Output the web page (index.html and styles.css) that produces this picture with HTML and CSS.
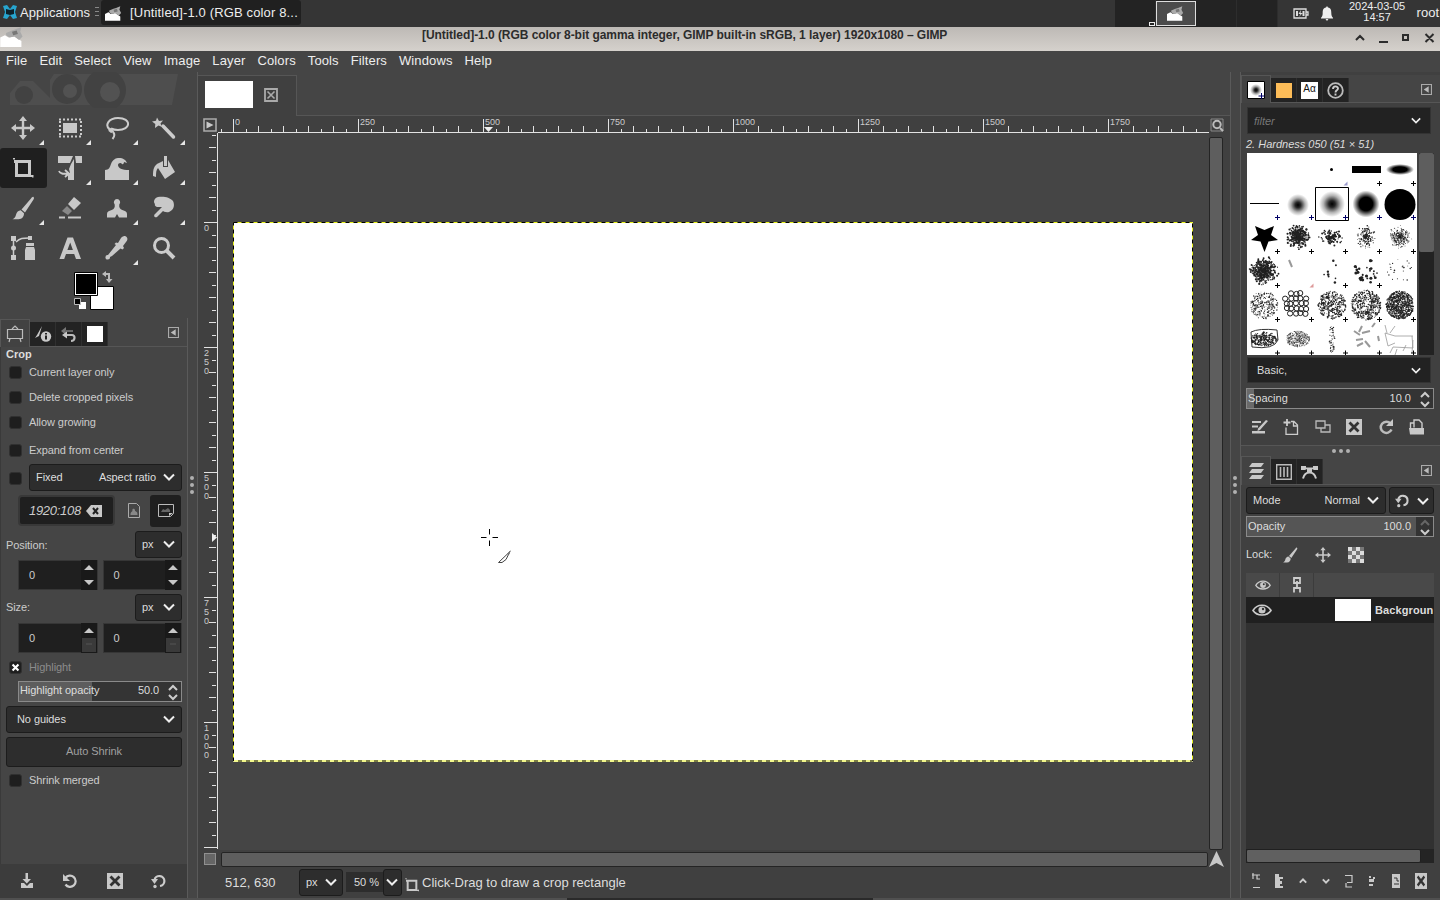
FILE: index.html
```html
<!DOCTYPE html>
<html lang="en">
<head>
  <meta charset="UTF-8">
  <title>[Untitled]-1.0 – GIMP</title>
  <link rel="stylesheet" href="styles.css">
</head>
<body>
  <svg class="defs" width="0" height="0">
    <defs>
      <symbol id="chev" viewBox="0 0 12 8"><path d="M1 1.5l5 5 5-5" fill="none" stroke="#eee" stroke-width="2"/></symbol>
      <symbol id="corner" viewBox="0 0 5 5"><path d="M5 0v5H0z" fill="#e6e6e6"/></symbol>
      <symbol id="dockmenu" viewBox="0 0 10 10"><path d="M.5.5h9v9h-9z" fill="none" stroke="#aaa"/><path d="M7 2v6L2.500 5z" fill="#bbb"/></symbol>
      <symbol id="move" viewBox="0 0 24 24"><path d="M12 0l4 5h-2.800v5.800H19V8l5 4-5 4v-2.800h-5.800V19H16l-4 5-4-5h2.800v-5.800H5V16l-5-4 5-4v2.800h5.800V5H8z"/></symbol>
      <symbol id="crop" viewBox="0 0 24 24"><path d="M3 4h17v15h2v2H4V7H3zM7 7v11h10V7z" fill-rule="evenodd"/><path d="M2 2h2v1.500H2zM21 19h1.500v2.500H21z"/></symbol>
      <symbol id="brush" viewBox="0 0 24 24"><path d="M22.500 1c1 .8.3 2-.3 3L14 16.500l-3.500-3L20 2.500c.8-.9 1.700-2 2.500-1.500zM9.700 14.300l3.300 3c.2 3-2 6-5.500 6H1.500c2-.8 3-2.300 3.500-4.500.6-2.600 2.400-4.300 4.700-4.500z"/></symbol>
      <symbol id="reset" viewBox="0 0 16 16"><path d="M3.500 5a5.600 5.600 0 1 1 0 6.500" fill="none" stroke="#ccc" stroke-width="2.200"/><path d="M1 1v7h7z"/></symbol>
      <symbol id="reset2" viewBox="0 0 16 16"><path d="M3.500 7a5 5 0 1 1 5.500 6" fill="none" stroke="#ccc" stroke-width="2.200"/><path d="M0 6h7l-3.500 5z"/><circle cx="4" cy="13.500" r="1.700"/></symbol>
      <symbol id="del" viewBox="0 0 16 16"><path d="M0 0h16v16H0z"/><path d="M3.500 3.500l9 9m0-9l-9 9" stroke="#333" stroke-width="2.800"/></symbol>
      <symbol id="eye" viewBox="0 0 20 12"><path d="M1 6.500C5-.5 15-.5 19 6.500 15 12.500 5 12.500 1 6.500z" fill="none" stroke="#ccc" stroke-width="1.600"/><circle cx="10" cy="6" r="3.600"/><circle cx="11" cy="5" r="1.200" fill="#333"/></symbol>
      <symbol id="wilber" viewBox="0 0 20 17"><path d="M0 9l4-2 3 2 5-1 6 4v5H0z" fill="#fff"/><path d="M5 5l5-2 3-1 5-2-1 4 2 4-3 3-4-3-4 1-3-2z" fill="#aaa"/><path d="M10 4l4-1 1 3-4 1z" fill="#777"/></symbol>
      <pattern id="hticks" width="25" height="14" patternUnits="userSpaceOnUse" x="15"><path d="M.5 14V8M13.500 14v-3" stroke="#e2e2e2"/></pattern>
      <pattern id="vticks" width="14" height="25" patternUnits="userSpaceOnUse" y="14"><path d="M14 .5H7M14 13.500h-4" stroke="#e2e2e2"/></pattern>
    </defs>
  </svg>

  <!-- desktop panel -->
  <header class="panel">
    <svg class="xfce" viewBox="0 0 16 16"><path d="M1 2l4-1 3 4 3-4 4 1-2 6 2 6-4 1-3-4-3 4-4-1 2-6z" fill="#27a5cf"/><path d="M4 5l4 1 4-1v5l-4 1-4-1z" fill="#0c222c"/></svg>
    <span>Applications</span>
    <svg class="grip" viewBox="0 0 4 10"><path d="M0 .5h4M0 4.500h4M0 8.500h4" stroke="#888"/></svg>
    <div class="task"><svg><use href="#wilber"/></svg><span>[Untitled]-1.0 (RGB color 8...</span></div>
    <div class="pager">
      <div class="desk"><i></i></div>
      <div class="desk-on"><svg><use href="#wilber"/></svg></div>
      <div class="desk"></div>
      <div class="desk"></div>
    </div>
    <svg class="battery" viewBox="0 0 16 11"><path d="M1 1h12v9H1zM13.500 4H15v3h-1.500" fill="none" stroke="#ddd" stroke-width="1.300"/><path d="M3 3h2v5H3zM9.500 3h2v5h-2zM8 2L5.500 6h2L6 9l3.500-4h-2z" fill="#ddd"/></svg>
    <svg class="bell" viewBox="0 0 12 15"><path d="M6 0l1 1.500C10 2 10.300 4.500 10.300 7c0 3 .7 3.500 1.700 4.700v.8H0v-.8C1 10.500 1.700 10 1.700 7c0-2.500.3-5 3.300-5.500zM4.500 13h3L6 15z" fill="#eee"/></svg>
    <div class="clock">2024-03-05<br>14:57</div>
    <span class="user">root</span>
  </header>

  <div class="titlebar">
    <svg class="appicon"><use href="#wilber"/></svg>
    <span class="title">[Untitled]-1.0 (RGB color 8-bit gamma integer, GIMP built-in sRGB, 1 layer) 1920x1080 – GIMP</span>
    <svg class="winbtns" viewBox="0 0 80 12" fill="none" stroke="#2c2c2c" stroke-width="2"><path d="M1 8l4-4 4 4M24 10h9M48 3h5v5h-5zM70.500 2l8 8m0-8l-8 8"/></svg>
  </div>

  <nav class="menubar">
    <span>File</span><span>Edit</span><span>Select</span><span>View</span><span>Image</span><span>Layer</span><span>Colors</span><span>Tools</span><span>Filters</span><span>Windows</span><span>Help</span>
  </nav>

  <main class="main">
    <aside class="left">
      <svg class="wilber-strip" viewBox="0 0 180 36"><path d="M10 33V21L20 9h13l17 17V8l4-6h124l-6 31z" fill="#4e4e4e"/><circle cx="24" cy="23" r="9" fill="#424242"/><circle cx="67" cy="17" r="15" fill="#424242"/><circle cx="70" cy="19" r="7" fill="#525252"/><circle cx="105" cy="18" r="21" fill="#424242"/><circle cx="110" cy="20" r="10" fill="#525252"/></svg>
      <div class="tools">
        <div class="tool"><svg><use href="#move"/></svg><svg class="more"><use href="#corner"/></svg></div>
        <div class="tool"><svg viewBox="0 0 24 24"><path d="M5 7h14v10H5z"/><path d="M1 3.500h23M1 20.500h23M2 5v15M23 5v15" fill="none" stroke="#ccc" stroke-width="2" stroke-dasharray="2 2"/></svg><svg class="more"><use href="#corner"/></svg></div>
        <div class="tool"><svg viewBox="0 0 24 24" ><path d="M5 14C-1 9 4 2 13 2c14 0 13 12 0 12-3 0-5-.5-7-1.500" fill="none" stroke="#ccc" stroke-width="2"/><path d="M4 11.500l4 1.500 1 3-3 1-2.500-2z"/><path d="M8 16c2 2 2 4-.5 7" fill="none" stroke="#ccc" stroke-width="2"/></svg><svg class="more"><use href="#corner"/></svg></div>
        <div class="tool"><svg viewBox="0 0 24 24"><path d="M5 1.500l2 3.500 4-.5-2.500 3L10 11 6.500 9.500 3 12l.3-4L0 5.500l4-.7z"/><path d="M11 10l10.500 11" stroke="#ccc" stroke-width="3.500" stroke-linecap="round"/></svg><svg class="more"><use href="#corner"/></svg></div>
        <div class="tool on"><svg><use href="#crop"/></svg></div>
        <div class="tool"><svg viewBox="0 0 24 24"><path d="M0 0h15l-3 7H0zM17 0h7v7h-6zM16 3v21h-6v-5l2-2-1-4 2-5z"/><path d="M1 15c1 3 4 3 9 2.500m-3-3.500l4 3.500L7 21" fill="none" stroke="#ccc" stroke-width="1.800"/></svg><svg class="more"><use href="#corner"/></svg></div>
        <div class="tool"><svg viewBox="0 0 24 24"><path d="M0 24V14c4 0 5-3 6-6 2-5 5-6 8-6 4 0 7 2 8 5l-3-1c0 1.500-1 3-2 2-1-2-4-1-4 1 0 3 4 5 11 5v10z"/></svg><svg class="more"><use href="#corner"/></svg></div>
        <div class="tool"><svg viewBox="0 0 24 24"><path d="M7 7l4-2v6h5V4l7 12-10 7-7-11c-2 2-2 5-2 9l-3-1c0-7 1-11 6-13z"/><path d="M12 0h3v10h-3z"/></svg><svg class="more"><use href="#corner"/></svg></div>
        <div class="tool"><svg><use href="#brush"/></svg><svg class="more"><use href="#corner"/></svg></div>
        <div class="tool"><svg viewBox="0 0 24 24"><path d="M16 1l7 6-7 7-6-6z"/><path d="M9 10l5 5-4 4-6-4z" fill="#888"/><path d="M1 20.500h6v2H1zM10 20.500h13v2H10z"/></svg></div>
        <div class="tool"><svg viewBox="0 0 24 24"><path d="M12 3a3.300 3.300 0 0 1 2.300 5.500c-.5 3 .7 4.500 3 5.500 3 1 4.700 1.500 4.700 4v3.500h-8L12 18l-2 3.500H2V18c0-2.500 1.700-3 4.700-4 2.300-1 3.500-2.500 3-5.500A3.300 3.300 0 0 1 12 3z"/></svg><svg class="more"><use href="#corner"/></svg></div>
        <div class="tool"><svg viewBox="0 0 24 24"><path d="M6 1c5-1 12 0 15 4 2 4 1 9-4 11-3 1-6-1-6-1l-6 6c-2 1-4-1-2-3l7-7H5c-3-1-2-3-2-3-2-2-1-6 3-7z"/></svg><svg class="more"><use href="#corner"/></svg></div>
        <div class="tool"><svg viewBox="0 0 24 24"><path d="M0 0h5v5H0zM0 19h5v5H0zM17 0h4v4h-4z"/><circle cx="2.500" cy="12" r="2.500"/><path d="M2.500 3v18M5 6c4-4 7-4 13-4" fill="none" stroke="#ccc" stroke-width="1.500"/><path d="M15 7h8v3h-8zM15 11h8l1 3v10H14V14z"/></svg></div>
        <div class="tool"><svg viewBox="0 0 24 24"><path d="M9.500 1.500h5.500L23 23h-5l-1.800-5H8l-1.800 5H1.500zM12.200 6.500L9.400 14h5.500z" fill-rule="evenodd"/></svg></div>
        <div class="tool"><svg viewBox="0 0 24 24"><path d="M20 0c3 1 3 4 1 6l-3 4 1 2-1.500 1.500-2-1L7 20l-2 1a2.300 2.300 0 1 1-2-2l8-10-1.500-1L11 6.500l2 .5 3-5c1-1.500 3-2 4-2z"/></svg><svg class="more"><use href="#corner"/></svg></div>
        <div class="tool"><svg viewBox="0 0 24 24"><circle cx="9.500" cy="9.500" r="7" fill="none" stroke="#ccc" stroke-width="3"/><path d="M15 15l7 7" stroke="#ccc" stroke-width="4"/></svg></div>
      </div>
      <svg class="swatches" viewBox="0 0 188 50"><path d="M90.500 18.500h23v23h-23z" fill="#fff" stroke="#000"/><path d="M74.500 4.500h23v23h-23z" fill="#fff" stroke="#000"/><path d="M76 6h20v20H76z" fill="#000"/><path d="M103 4l4-3v2h4v6h2.500L110 13l-3-4h2V5h-2v2z" fill="#bbb" transform="translate(-1 2)"/><path d="M79 34h7v7h-7z" fill="#fff"/><path d="M74.500 30.500h6v6h-6z" fill="#000" stroke="#bbb"/></svg>

      <section class="dock options">
        <div class="tabs">
          <div class="tab on"><svg width="18" height="18" viewBox="0 0 18 18" fill="none" stroke="#bbb" stroke-width="1.200"><path d="M1.500 4.500h15v9h-15zM4 13.500L3 17m11-3.500l1 3.500M6 4l3-3 3 3"/></svg></div>
          <div class="tab"><svg width="18" height="18" viewBox="0 0 18 18"><path d="M8 1L3 10l-2 3 4-2z"/><circle cx="12" cy="11.500" r="5.200"/><path d="M12 8v1.500m0 1v4" stroke="#222" stroke-width="2"/></svg></div>
          <div class="tab"><svg width="18" height="18" viewBox="0 0 18 18"><path d="M1 6l5-4v8z" fill="#777"/><path d="M5 6h8" stroke="#666" stroke-width="2"/><path d="M5 10h7c3.500 0 3.500 6-1 6" fill="none" stroke="#bbb" stroke-width="2.200"/><path d="M2 10l5-3.500v7z"/></svg></div>
          <div class="tab"><b class="whitebox"></b></div>
          <svg class="dm"><use href="#dockmenu"/></svg>
        </div>
        <div class="optbody">
          <h2>Crop</h2>
          <div class="row h23"><i class="check"></i>Current layer only</div>
          <div class="row h26"><i class="check"></i>Delete cropped pixels</div>
          <div class="row h25"><i class="check"></i>Allow growing</div>
          <div class="row h29"><i class="check"></i>Expand from center</div>
          <div class="row h27"><i class="check"></i><div class="combo grow"><span>Fixed</span><span class="end">Aspect ratio</span><svg><use href="#chev"/></svg></div></div>
          <div class="row h39 indent">
            <div class="entry ratio"><em>1920:108</em><svg width="16" height="12" viewBox="0 0 16 12"><path d="M5 0h11v12H5L0 6z"/><path d="M7 3l5 6m0-6L7 9" stroke="#222" stroke-width="2"/></svg></div>
            <svg class="portrait" width="12" height="15" viewBox="0 0 12 15"><path d="M.5.5h8l3 3v11H.5z" fill="none" stroke="#aaa"/><path d="M2.500 12c0-3 1-3 2-4-1-3 3-3 2.500 0 2 1 2.500 1 2.500 4z" fill="#888"/></svg>
            <div class="landscape"><svg width="16" height="13" viewBox="0 0 16 13"><path d="M.5.500h15v9l-3 3H.5z" fill="none" stroke="#bbb"/><path d="M3 8l2-3 2 1 3-2 2 2v2z" fill="#666"/><path d="M11 12V9h4z"/></svg></div>
          </div>
          <div class="row h29"><span class="lab">Position:</span><div class="combo unit"><span>px</span><svg><use href="#chev"/></svg></div></div>
          <div class="row h32 indent">
            <div class="spin"><span>0</span><svg viewBox="0 0 16 30"><path d="M3 10l5-5 5 5zM3 20l5 5 5-5z"/></svg></div>
            <div class="spin"><span>0</span><svg viewBox="0 0 16 30"><path d="M3 10l5-5 5 5zM3 20l5 5 5-5z"/></svg></div>
          </div>
          <div class="row h32"><span class="lab">Size:</span><div class="combo unit"><span>px</span><svg><use href="#chev"/></svg></div></div>
          <div class="row h30 indent">
            <div class="spin"><span>0</span><svg viewBox="0 0 16 30"><path d="M3 10l5-5 5 5z"/><path d="M1 15h14v14H1z" fill="#3a3a3a"/><path d="M5 21h6" stroke="#555"/></svg></div>
            <div class="spin"><span>0</span><svg viewBox="0 0 16 30"><path d="M3 10l5-5 5 5z"/><path d="M1 15h14v14H1z" fill="#3a3a3a"/><path d="M5 21h6" stroke="#555"/></svg></div>
          </div>
          <div class="row h27 dim"><i class="check"><svg viewBox="0 0 13 13"><path d="M3 3l7 7m0-7l-7 7" stroke="#fff" stroke-width="2.500"/></svg></i>Highlight</div>
          <div class="row h22 indent"><div class="scale half"><span>Highlight opacity</span><span class="end">50.0</span><svg viewBox="0 0 10 18"><path d="M1 7l4-4 4 4M1 12l4 4 4-4" fill="none" stroke="#ccc" stroke-width="2"/></svg></div></div>
          <div class="row h34"><div class="combo wide"><span>No guides</span><svg><use href="#chev"/></svg></div></div>
          <div class="row h32"><div class="button">Auto Shrink</div></div>
          <div class="row h25"><i class="check"></i>Shrink merged</div>
        </div>
        <div class="foot">
          <svg width="14" height="16" viewBox="0 0 14 16"><path d="M5.500 0h2.500v6h3l-4.200 4.500L2.500 6h3zM1 10h3l3 3 3-3h3v5H1z"/></svg>
          <svg width="16" height="16"><use href="#reset"/></svg>
          <svg width="16" height="16"><use href="#del"/></svg>
          <svg width="16" height="16"><use href="#reset2"/></svg>
        </div>
      </section>
    </aside>

    <div class="splitter"><b></b><b></b><b></b></div>

    <section class="center">
      <div class="imgtabs"><div class="imgtab"><b></b><svg width="14" height="14" viewBox="0 0 14 14" fill="none" stroke="#aaa"><path d="M1 1h12v12H1z" stroke-width="1.800"/><path d="M3.500 3.500l7 7m0-7l-7 7" stroke-width="1.600"/></svg></div></div>
      <div class="canvasgrid">
        <div class="cell"><svg class="qm" width="14" height="14" viewBox="0 0 14 14"><path d="M1 1h12v12H1z" fill="none" stroke="#aaa" stroke-width="1.600"/><path d="M3.500 3.500v7l7-3.500z"/></svg></div>
        <svg class="hruler" viewBox="0 0 991 17">
          <g transform="translate(0 2)"><rect width="990" height="14" fill="url(#hticks)"/></g>
          <path d="M0 16.500h991M15.500 3v14M140.500 3v14M265.500 3v14M390.500 3v14M515.500 3v14M640.500 3v14M765.500 3v14M890.500 3v14" stroke="#e2e2e2"/>
          <path d="M266 11h9l-4.500 5z" fill="#eee"/>
          <text x="17" y="9">0</text><text x="142" y="9">250</text><text x="267" y="9">500</text><text x="392" y="9">750</text><text x="517" y="9">1000</text><text x="642" y="9">1250</text><text x="767" y="9">1500</text><text x="892" y="9">1750</text>
        </svg>
        <div class="cell"><svg width="14" height="14" viewBox="0 0 14 14"><path d="M1 1h12v12H1z" fill="none" stroke="#888"/><circle cx="7" cy="6.500" r="3.700" fill="none" stroke="#bbb" stroke-width="2"/><path d="M10 10l3 3" stroke="#bbb" stroke-width="2"/></svg></div>
        <svg class="vruler" viewBox="0 0 16 717">
          <rect x="2" width="14" height="716" fill="url(#vticks)"/>
          <path d="M15.500 0v716M2 89.500h13M2 214.500h13M2 339.500h13M2 464.500h13M2 589.500h13M2 714.500h13" stroke="#e2e2e2"/>
          <path d="M10 400v9l5-4.500z" fill="#eee"/>
          <text x="2" y="98">0</text>
          <text><tspan x="2" y="223">2</tspan><tspan x="2" y="232">5</tspan><tspan x="2" y="241">0</tspan></text>
          <text><tspan x="2" y="348">5</tspan><tspan x="2" y="357">0</tspan><tspan x="2" y="366">0</tspan></text>
          <text><tspan x="2" y="473">7</tspan><tspan x="2" y="482">5</tspan><tspan x="2" y="491">0</tspan></text>
          <text><tspan x="2" y="598">1</tspan><tspan x="2" y="607">0</tspan><tspan x="2" y="616">0</tspan><tspan x="2" y="625">0</tspan></text>
        </svg>
        <div class="canvas">
          <svg viewBox="0 0 960 540">
            <path d="M0 0h960v540H0z" fill="#fff"/>
            <path d="M.5.5h959v538.500H.5z" fill="none" stroke="#e8f21c"/>
            <path d="M.5.5h959v538.500H.5z" fill="none" stroke="#000" stroke-dasharray="4 4"/>
            <path d="M248 315.500h5.500m6 0h5.500M256.500 307v5.500m0 6v5.500" stroke="#000"/>
            <path d="M265.500 340.500l11.500-11-4 8-4 3z" fill="#fff" stroke="#444"/><path d="M274 332l4-4-2 5z" fill="#777"/>
          </svg>
        </div>
        <div class="vscroll"></div>
        <div class="cell"><svg width="12" height="12" viewBox="0 0 12 12"><path d="M0 0h12v12H0z" fill="#666"/><path d="M.5.5h11v11H.5z" fill="none" stroke="#bbb" stroke-dasharray="1 1"/></svg></div>
        <div class="hscroll"></div>
        <div class="cell"><svg width="15" height="16" viewBox="0 0 15 16"><path d="M7.500 0L15 16l-7.500-4L0 16z"/></svg></div>
      </div>
      <div class="status">
        <span class="coords">512, 630</span>
        <div class="combo su"><span>px</span><svg><use href="#chev"/></svg></div>
        <div class="zoomval">50 %</div><div class="combo zc"><svg><use href="#chev"/></svg></div>
        <svg class="cropico"><use href="#crop"/></svg>
        <span>Click-Drag to draw a crop rectangle</span>
      </div>
    </section>

    <div class="splitter"><b></b><b></b><b></b></div>

    <aside class="right">
      <section class="dock brushes">
        <div class="tabs">
          <div class="tab on"><svg width="18" height="18" viewBox="0 0 18 18"><path d="M.5.500h17v17H.5z" fill="#fff" stroke="#000"/><circle cx="9" cy="9" r="6" fill="url(#soft)"/><path d="M14.500 12v6M11.500 15h6" stroke="#006"/></svg></div>
          <div class="tab"><b class="orangebox"></b></div>
          <div class="tab"><b class="fontbox">Aα</b></div>
          <div class="tab"><svg width="17" height="17" viewBox="0 0 17 17"><circle cx="8.500" cy="8.500" r="7.300" fill="none" stroke="#bbb" stroke-width="1.800"/><path d="M6 7c0-3.500 5-3.300 5-.5 0 2-2.500 1.700-2.500 4M8.500 11.500v2" fill="none" stroke="#ccc" stroke-width="1.900"/></svg></div>
          <svg class="dm"><use href="#dockmenu"/></svg>
        </div>
        <div class="filter"><em>filter</em><svg><use href="#chev"/></svg></div>
        <em class="brushname">2. Hardness 050 (51 × 51)</em>
        <div class="brushwrap">
          <svg id="brushgrid" viewBox="0 0 170 202">
            <defs>
              <radialGradient id="soft"><stop offset="0"/><stop offset=".25" stop-opacity=".85"/><stop offset=".65" stop-opacity=".3"/><stop offset="1" stop-opacity="0"/></radialGradient>
              <radialGradient id="hard"><stop offset=".5"/><stop offset="1" stop-opacity="0"/></radialGradient>
            </defs>
            <rect width="170" height="202" fill="#fff"/>
            <circle cx="84.500" cy="16.500" r="1.500"/>
            <path d="M105 13h29v7h-29z"/>
            <ellipse cx="153" cy="16.500" rx="14" ry="5.500" fill="url(#hard)"/>
            <path d="M3 50.500h29" stroke="#000"/>
            <circle cx="51" cy="52" r="11" fill="url(#soft)"/>
            <circle cx="85" cy="51" r="13" fill="url(#soft)"/>
            <circle cx="119" cy="51" r="13.500" fill="url(#hard)"/>
            <circle cx="153" cy="51.500" r="15.500"/>
            <path d="M68.500 34.500h33v33h-33z" fill="none" stroke="#000"/>
            <path d="M8 73l9.500 4 9.500-4-3 9 7 5-9.500 1.500L17.500 99l-4-10.500L4 87l7-5z"/>
            <path d="M42 107l3 7" stroke="#999" stroke-width="2"/>
            <path d="M4 179q8-4 26-2l1 10q-4 10-26 7z" fill="none" stroke="#333"/>
            <g class="sketch"><path class="strokes" d="M107 178l6 4m2-9l-3 6m11-1l-8 2m-6 7l7-1m2 2l5 6m-13-1l6-3m9-16l3-4M131 183l1 5"/><path d="M138 180l10 3h18m-1 0l1 12-20-1-3 6m-5-20l3 13 7-3m2 6l-2 6m-8-22l-2-8m5 8l5-7m18 14l-1 13m-6-8l-3 6"/></g>
          </svg>
          <div class="bscroll"><b></b></div>
        </div>
        <div class="filter basic"><span>Basic,</span><svg><use href="#chev"/></svg></div>
        <div class="scale low"><span>Spacing</span><span class="end">10.0</span><svg viewBox="0 0 10 18"><path d="M1 7l4-4 4 4M1 12l4 4 4-4" fill="none" stroke="#ccc" stroke-width="2"/></svg></div>
        <div class="foot">
          <svg width="16" height="16" viewBox="0 0 16 16"><path d="M0 2h9v2H0zM0 6.500h6v2H0zM0 12h13v2.500H0zM14 1l2 1-8 9-2.500 1 .5-2.500z"/></svg>
          <svg width="16" height="16" viewBox="0 0 16 16"><path d="M4 0v7M.5 3.500h7" stroke="#ccc" stroke-width="1.800"/><path d="M8 2.500h3l3.500 3.500v9.500H3v-7M10.500 3v4h4" fill="none" stroke="#ccc" stroke-width="1.300"/></svg>
          <svg width="16" height="16" viewBox="0 0 16 16" fill="none" stroke="#bbb" stroke-width="1.300"><path d="M1 2h9v7H1zM6 9.500V13h9V6h-4.500"/></svg>
          <svg width="16" height="16"><use href="#del"/></svg>
          <svg width="16" height="16" viewBox="0 0 16 16"><path d="M12.500 4.500a5.600 5.600 0 1 0 1 6" fill="none" stroke="#bbb" stroke-width="2.500"/><path d="M15 0v7H8z"/></svg>
          <svg width="16" height="16" viewBox="0 0 16 16"><path d="M0 9h15v6.500H1z"/><path d="M1.500 9V4H5M5 8.500V1h5l3 3v5" fill="none" stroke="#ccc" stroke-width="1.400"/></svg>
        </div>
      </section>
      <div class="hsplit"><b></b><b></b><b></b></div>
      <section class="dock layers">
        <div class="tabs">
          <div class="tab on"><svg width="17" height="17" viewBox="0 0 17 17"><path d="M4 0h12l-3 4H1zM4 6h12l-3 4H1zM4 12h12l-3 4H1z"/></svg></div>
          <div class="tab"><svg width="16" height="16" viewBox="0 0 16 16" fill="none" stroke="#bbb"><path d="M.7.7h14.600v14.600H.7z" stroke-width="1.400"/><path d="M4.500 3v10M8 3v10M11.500 3v10" stroke-width="1.600"/></svg></div>
          <div class="tab"><svg width="17" height="16" viewBox="0 0 17 16"><path d="M0 2h5v1.500h7V2h5v4h-4l-2-1H6L4 6H0z"/><path d="M2 14.500c1-4 3-6 6.500-6s5.500 2 6.500 6" fill="none" stroke="#ccc" stroke-width="2"/><path d="M6 4h5v5H6z"/></svg></div>
          <svg class="dm"><use href="#dockmenu"/></svg>
        </div>
        <div class="moderow"><div class="combo mode"><span>Mode</span><span class="end">Normal</span><svg><use href="#chev"/></svg></div><div class="combo swap"><svg class="r"><use href="#reset2"/></svg><svg><use href="#chev"/></svg></div></div>
        <div class="scale full"><span>Opacity</span><span class="end">100.0</span><svg viewBox="0 0 10 18"><path d="M1 7l4-4 4 4" fill="none" stroke="#666" stroke-width="2"/><path d="M1 12l4 4 4-4" fill="none" stroke="#ccc" stroke-width="2"/></svg></div>
        <div class="lock"><span>Lock:</span>
          <svg><use href="#brush"/></svg><svg><use href="#move"/></svg>
          <svg viewBox="0 0 16 16"><path d="M0 0h16v16H0z" fill="#777"/><path d="M0 0h4v4H0zM8 0h4v4H8zM4 4h4v4H4zM12 4h4v4h-4zM0 8h4v4H0zM8 8h4v4H8zM4 12h4v4H4zM12 12h4v4h-4z" fill="#ddd"/></svg>
        </div>
        <div class="lhead"><div><svg width="16" height="10"><use href="#eye"/></svg></div><div><svg width="10" height="16" viewBox="0 0 10 16" fill="none" stroke="#ccc" stroke-width="1.800"><path d="M2 1h6v5H2zM5 4v7M2 15.500V11h6v4.500"/></svg></div></div>
        <div class="layer"><svg width="20" height="12"><use href="#eye"/></svg><b class="thumb"></b><strong>Backgroun</strong></div>
        <div class="llist"></div>
        <div class="lscroll"><b></b></div>
        <div class="foot">
          <svg width="8" height="16" viewBox="0 0 8 16"><path d="M1 0v6M0 2h8M5 2v4h3M1 14.500h7" fill="none" stroke="#ccc" stroke-width="1.200"/></svg>
          <svg width="8" height="16" viewBox="0 0 8 16"><path d="M0 1h4v3h4v2H5v2h2v3H5v2h3v2H0z"/></svg>
          <svg width="8" height="8" viewBox="0 0 10 8"><path d="M1 6l4-4 4 4" fill="none" stroke="#ccc" stroke-width="2.400"/></svg>
          <svg width="8" height="8" viewBox="0 0 10 8"><path d="M1 2l4 4 4-4" fill="none" stroke="#ccc" stroke-width="2.400"/></svg>
          <svg width="8" height="14" viewBox="0 0 8 14"><path d="M0 1.500h7v7H2M1 9v4h6" fill="none" stroke="#ccc" stroke-width="1.200"/></svg>
          <svg width="8" height="14" viewBox="0 0 8 14"><path d="M1 2h2v2H1zM1 5h5v3H1zM1 10h4v2H1zM5 3h2v2H5z"/></svg>
          <svg width="8" height="14" viewBox="0 0 8 14"><path d="M0 0h8v14H0z"/><path d="M2 4h3v3h2M2 10h5" fill="none" stroke="#333"/></svg>
          <svg width="12" height="16" viewBox="0 0 16 16" preserveAspectRatio="none"><use href="#del"/></svg>
        </div>
      </section>
    </aside>
  </main>
  <div class="bottomedge"><b></b></div>
  <script src="script.js"></script>
</body>
</html>
```
FILE: styles.css
```css
* {
    box-sizing: border-box;
}
body {
    margin: 0;
    width: 1440px;
    height: 900px;
    overflow: hidden;
    display: flex;
    flex-direction: column;
    background: #454545;
    color: #ddd;
    fill: #c8c8c8;
    font-family: "Liberation Sans", Arial, sans-serif;
    font-size: 11px;
}
svg {
    display: block;
    flex: none;
}
.defs {
    position: absolute;
}
.panel {
    height: 27px;
    flex: none;
    display: flex;
    align-items: center;
    background: #353535;
    font-size: 13px;
    color: #eee;
    padding-bottom: 3px;
}
.xfce {
    width: 16px;
    height: 16px;
    margin: 0 2px 0 2px;
}
.grip {
    width: 4px;
    height: 10px;
    margin: 0 2px 0 5px;
}
.task {
    width: 200px;
    height: 25px;
    display: flex;
    align-items: center;
    background: #202020;
    border-radius: 3px;
    padding-left: 4px;
    white-space: nowrap;
    letter-spacing: 0.15px;
}
.task svg {
    width: 17px;
    height: 15px;
    margin: 3px 8px 0 0;
}
.pager {
    display: flex;
    margin-left: auto;
    height: 27px;
    margin-bottom: -3px;
    background: #232323;
}
.desk {
    width: 41px;
    border-right: 1px solid #2d2d2d;
    display: flex;
    align-items: flex-end;
    justify-content: flex-end;
}
.desk i {
    width: 6px;
    height: 4px;
    border: 1px solid #eee;
    margin-bottom: 1px;
}
.desk-on {
    width: 40px;
    height: 25px;
    margin-top: 1px;
    border: 1px solid #ddd;
    background: #4b4b4b;
    display: flex;
    align-items: center;
    justify-content: center;
}
.desk-on svg {
    width: 17px;
    height: 15px;
}
.battery {
    width: 16px;
    height: 11px;
    margin: 3px 0 0 15px;
}
.bell {
    width: 12px;
    height: 15px;
    margin: 3px 0 0 12px;
}
.clock {
    font-size: 11px;
    line-height: 11px;
    text-align: center;
    margin-left: 16px;
    width: 57px;
    white-space: nowrap;
}
.user {
    margin: 0 1px 0 11px;
}
.titlebar {
    height: 24px;
    flex: none;
    display: flex;
    background: linear-gradient(#bdb9b5, #d5d1cc);
    color: #2c2c2c;
    font-weight: bold;
    font-size: 12px;
}
.appicon {
    width: 24px;
    height: 20px;
}
.title {
    margin: 2px 0 0 398px;
    line-height: 13px;
    white-space: nowrap;
    letter-spacing: -0.05px;
}
.winbtns {
    width: 80px;
    height: 12px;
    margin: 5px 5px 0 auto;
}
.menubar {
    height: 21px;
    flex: none;
    display: flex;
    gap: 12px;
    padding-left: 6px;
    font-size: 13px;
    line-height: 19px;
    color: #eee;
    letter-spacing: 0.12px;
}
.main {
    flex: 1;
    display: flex;
    min-height: 0;
}
.left {
    width: 188px;
    display: flex;
    flex-direction: column;
}
.wilber-strip {
    width: 180px;
    height: 36px;
}
.tools {
    display: grid;
    grid-template-columns: repeat(4, 47px);
    grid-auto-rows: 40px;
}
.tool {
    display: flex;
    align-items: center;
    justify-content: center;
    position: relative;
    padding-right: 1px;
}
.tool svg {
    width: 24px;
    height: 24px;
}
.tool .more {
    position: absolute;
    width: 5px;
    height: 5px;
    right: 3px;
    bottom: 3px;
}
.tool.on {
    background: #1f1f1f;
    border-radius: 3px;
}
.swatches {
    width: 188px;
    height: 50px;
}
.dock {
    display: flex;
    flex-direction: column;
}
.options {
    flex: 1;
    border-right: 1px solid #5a5a5a;
    padding-top: 1px;
}
.tabs {
    height: 28px;
    flex: none;
    display: flex;
    border-bottom: 1px solid #565656;
}
.tab {
    width: 26px;
    background: #232323;
    border-right: 1px solid #303030;
    display: flex;
    align-items: center;
    justify-content: center;
    margin-top: 3px;
}
.tab.on {
    width: 30px;
    margin: 0 0 -1px;
    background: #424242;
    border: 1px solid #565656;
    border-bottom: 0;
}
.dm {
    width: 11px;
    height: 11px;
    margin: 8px 8px 0 auto;
}
.whitebox {
    width: 16px;
    height: 16px;
    background: #fff;
}
.orangebox {
    width: 16px;
    height: 15px;
    background: #fcbc58;
}
.fontbox {
    width: 17px;
    height: 17px;
    background: #fff;
    color: #111;
    font: 10px/14px "Liberation Sans", sans-serif;
    text-align: center;
}
.optbody {
    flex: 1;
    padding: 0 5px 0 5px;
    border-left: 1px solid #3a3a3a;
    letter-spacing: -0.08px;
}
.optbody h2 {
    font-size: 11px;
    line-height: 14px;
    height: 14px;
    margin: 0;
    letter-spacing: 0;
}
.row {
    display: flex;
    align-items: center;
    padding-left: 4px;
    color: #ccc;
}
.indent {
    padding-left: 12px;
    gap: 5px;
}
.h22 { height: 22px; }
.h23 { height: 23px; padding-bottom: 1px; }
.h25 { height: 25px; padding-bottom: 1px; }
.h26 { height: 26px; }
.h27 { height: 27px; }
.h29 { height: 29px; }
.h30 { height: 30px; }
.h32 { height: 32px; }
.h34 { height: 34px; }
.h39 { height: 39px; }
.dim {
    color: #8c8c8c;
}
.check {
    width: 13px;
    height: 13px;
    flex: none;
    border-radius: 3px;
    background: #1e1e1e;
    border: 1px solid #303030;
    margin: 1px 7px 0 -1px;
}
.combo {
    height: 27px;
    display: flex;
    align-items: center;
    background: #2d2d2d;
    border: 1px solid #1c1c1c;
    border-radius: 3px;
    padding: 0 6px 1px;
    color: #ddd;
}
.combo svg {
    width: 12px;
    height: 8px;
    margin-left: 7px;
}
.combo .end, .scale .end {
    margin-left: auto;
}
.grow {
    flex: 1;
}
.entry {
    height: 31px;
    background: #1f1f1f;
    border: 2px solid #383838;
    border-radius: 4px;
    display: flex;
    align-items: center;
}
.ratio {
    width: 97px;
    padding-left: 9px;
    font-size: 13px;
    letter-spacing: -0.3px;
    gap: 5px;
}
.portrait {
    margin: 0 5px 0 8px;
}
.landscape {
    width: 31px;
    height: 32px;
    background: #1f1f1f;
    border-radius: 3px;
    display: flex;
    align-items: center;
    justify-content: center;
}
.lab {
    margin-left: -4px;
}
.unit {
    width: 47px;
    margin-left: auto;
}
.unit svg {
    margin-left: auto;
}
.spin {
    flex: 1;
    height: 30px;
    background: #1f1f1f;
    border: 1px solid #363636;
    display: flex;
    align-items: center;
    justify-content: space-between;
    padding-left: 10px;
}
.spin svg {
    width: 16px;
    height: 30px;
    background: #191919;
}
.scale {
    height: 21px;
    width: 100%;
    flex: none;
    border: 1px solid #8a8a8a;
    display: flex;
    align-items: center;
    padding: 0 3px 2px 1px;
    color: #ddd;
    white-space: nowrap;
}
.scale svg {
    width: 10px;
    height: 18px;
    margin: 1px 0 -2px 9px;
}
.half {
    background: linear-gradient(90deg, #5d5d5d 45%, #343434 45%);
}
.low {
    background: linear-gradient(90deg, #6a6a6a 4%, #343434 4%);
}
.full {
    background: linear-gradient(90deg, #555 91%, #333 91%);
}
.wide {
    width: auto;
    flex: 1;
    margin-left: -4px;
    padding-left: 10px;
}
.wide svg {
    margin-left: auto;
}
.button {
    flex: 1;
    height: 30px;
    margin-left: -4px;
    line-height: 27px;
    text-align: center;
    color: #a0a0a0;
    background: #2d2d2d;
    border: 1px solid #1c1c1c;
    border-radius: 3px;
}
.foot {
    display: flex;
    align-items: center;
    justify-content: space-between;
    background: #3c3c3c;
}
.options .foot {
    height: 34px;
    padding: 0 20px;
}
.splitter {
    width: 10px;
    flex: none;
    display: flex;
    flex-direction: column;
    align-items: center;
    gap: 3px;
    padding: 404px 2px 0 0;
    border-right: 1px solid #5a5a5a;
}
.splitter b, .hsplit b {
    width: 4px;
    height: 4px;
    border-radius: 50%;
    background: #b0b0b0;
}
.center {
    width: 1033px;
    flex: none;
    display: flex;
    flex-direction: column;
    background: #404040;
    border-right: 1px solid #5a5a5a;
}
.imgtabs {
    height: 44px;
    flex: none;
    background: #454545;
    border-bottom: 1px solid #565656;
    padding-top: 3px;
}
.imgtab {
    width: 99px;
    height: 41px;
    background: #404040;
    border: 1px solid #565656;
    border-bottom: 0;
    border-left: 0;
    display: flex;
    align-items: center;
    gap: 11px;
    padding: 0 0 3px 7px;
}
.imgtab b {
    width: 48px;
    height: 27px;
    background: #fff;
}
.canvasgrid {
    display: grid;
    grid-template-columns: 16px 991px 15px;
    grid-template-rows: 17px 717px 17px;
    padding-left: 4px;
}
.cell {
    display: flex;
    align-items: center;
    justify-content: center;
}
.hruler, .vruler {
    font-size: 9px;
}
.hruler text, .vruler text {
    fill: #ccc;
}
.hruler {
    width: 991px;
    height: 17px;
}
.vruler {
    width: 16px;
    height: 717px;
}
.canvas {
    background: #454545;
    padding: 89px 0 0 15px;
}
.canvas svg {
    width: 960px;
    height: 540px;
}
.vscroll {
    margin: 4px 1px 0 0;
    background: #5e5e5e;
    border: 1px solid #242424;
    border-radius: 2px;
}
.hscroll {
    margin: 2px 1px 0 3px;
    background: #5e5e5e;
    border: 1px solid #242424;
    border-radius: 2px;
}
.status {
    height: 30px;
    display: flex;
    align-items: center;
    font-size: 13px;
    padding-left: 27px;
}
.coords {
    width: 74px;
}
.su {
    width: 44px;
    font-size: 11px;
}
.zoomval {
    width: 37px;
    height: 20px;
    line-height: 20px;
    margin-left: 3px;
    font-size: 11px;
    text-align: right;
    padding-right: 4px;
    background: #2d2d2d;
    white-space: nowrap;
}
.zc {
    width: 19px;
    padding: 0 2px;
}
.zc svg {
    margin: 0;
}
.cropico {
    width: 16px;
    height: 16px;
    margin: 6px 2px 0 2px;
}
.right {
    width: 199px;
    flex: none;
}
.brushes, .layers {
    padding: 0 6px 0 5px;
    background: #404040;
}
.brushes .tabs, .layers .tabs {
    margin: 0 -6px 0 -5px;
    background: #454545;
}
.right .dm {
    margin: 9px 8px 0 auto;
}
.brushes {
    height: 374px;
    padding-top: 3px;
    border-bottom: 1px solid #565656;
}
.filter {
    height: 27px;
    background: #222;
    border: 1px solid #333;
    margin: 4px 3px 0 1px;
    display: flex;
    align-items: center;
    justify-content: space-between;
    padding: 0 9px 0 6px;
    color: #777;
}
.filter svg {
    width: 10px;
    height: 7px;
}
.basic {
    margin-top: 2px;
    height: 26px;
    color: #ddd;
    padding-left: 9px;
}
.brushname {
    height: 19px;
    line-height: 20px;
    font-size: 11px;
    color: #ddd;
    white-space: nowrap;
}
.brushwrap {
    height: 202px;
    display: flex;
    justify-content: space-between;
    padding-left: 1px;
}
#brushgrid {
    width: 170px;
    height: 202px;
    fill: #000;
}
.sketch {
    fill: none;
    stroke: #999;
    stroke-width: .8px;
}
.strokes {
    stroke-width: 2px;
}
.bscroll {
    width: 15px;
    background: #222;
}
.bscroll b {
    display: block;
    height: 99px;
    background: #5e5e5e;
    border-radius: 2px;
}
.brushes .scale {
    margin-top: 5px;
}
.brushes .foot {
    height: 36px;
    padding: 0 9px 0 6px;
    background: none;
}
.hsplit {
    height: 9px;
    display: flex;
    justify-content: center;
    align-items: center;
    gap: 3px;
}
.layers {
    height: 443px;
}
.layers .tabs {
    height: 30px;
    padding-top: 1px;
}
.moderow {
    display: flex;
    gap: 3px;
    margin: 2px 0;
}
.mode {
    flex: 1;
}
.swap {
    width: 45px;
    padding: 0 5px;
}
.swap .r {
    width: 15px;
    height: 15px;
    margin: 0;
}
.lock {
    display: flex;
    align-items: center;
    height: 36px;
}
.lock svg {
    width: 16px;
    height: 16px;
    margin-left: 17px;
}
.lock span {
    width: 18px;
    margin: 0 1px 3px 0;
}
.lhead {
    height: 24px;
    display: flex;
    background: #494949;
}
.lhead div {
    width: 34px;
    border-right: 1px solid #3c3c3c;
    display: flex;
    align-items: center;
    justify-content: center;
}
.layer {
    height: 26px;
    background: #202020;
    display: flex;
    align-items: center;
    padding-left: 6px;
}
.layer strong {
    letter-spacing: 0.1px;
}
.thumb {
    width: 36px;
    height: 22px;
    background: #fff;
    margin: 0 4px 0 63px;
    flex: none;
}
.llist {
    height: 226px;
    background: #313131;
}
.lscroll {
    height: 14px;
    background: #242424;
}
.lscroll b {
    display: block;
    width: 175px;
    height: 14px;
    background: #606060;
    border: 1px solid #202020;
    border-radius: 2px;
}
.layers .foot {
    height: 35px;
    background: none;
    padding: 0 7px 0 6px;
}
.bottomedge {
    height: 2px;
    flex: none;
    background: #505050;
}
.bottomedge b {
    display: block;
    width: 306px;
    height: 2px;
    margin-left: 567px;
    background: #2a2a2a;
}
```
FILE: script.js
```js
// speckled brush previews: [col, row, dots, spread x, spread y, dot size]
var brushes = [
  [1, 2, 380, 11, 11, .9], [2, 2, 120, 12, 8, .9], [3, 2, 170, 8, 12, .7], [4, 2, 420, 10, 10, .5],
  [0, 3, 480, 13, 13, .9], [2, 3, 8, 12, 12, 1.2], [3, 3, 28, 14, 13, 1.5], [4, 3, 24, 13, 13, .7],
  [0, 4, 300, 14, 14, .6], [2, 4, 380, 14, 14, .7], [3, 4, 430, 15, 15, .7], [4, 4, 800, 14, 14, .7],
  [0, 5, 190, 13, 7, .8], [1, 5, 420, 12, 8, .45], [2, 5, 60, 3, 14, .6]
];
var seed = 7;
function rnd() {
  seed = (seed * 16807) % 2147483647;
  return seed / 2147483647;
}
var out = "";
brushes.forEach(function (b) {
  var cx = b[0] * 34 + 17, cy = b[1] * 34 + 16;
  var scatter = b[2] < 100;
  for (var i = 0; i < b[2]; i++) {
    var a = rnd() * 6.283, r = b[1] >= 4 || scatter ? Math.sqrt(rnd()) : rnd() * (.7 + rnd() * .5);
    out += '<circle cx="' + (cx + Math.cos(a) * r * b[3]).toFixed(1) + '" cy="' + (cy + Math.sin(a) * r * b[4]).toFixed(1) + '" r="' + (b[5] * (.5 + rnd() * .7)).toFixed(2) + '" fill="#222"/>';
  }
});
// cell brush made of packed rings
for (var y = -12; y <= 12; y += 5) {
  for (var x = -12; x <= 12; x += 5) {
    if (x * x + y * y < 200) {
      out += '<circle cx="' + (50 + x + rnd() * 2) + '" cy="' + (152 + y + rnd()) + '" r="2.6" fill="none" stroke="#222"/>';
    }
  }
}
// plus marks in the cell corners
for (var row = 0; row < 6; row++) {
  for (var col = 0; col < 5; col++) {
    var px = col * 34 + 30.5, py = Math.min(row * 34 + 30.5, 200);
    if (row === 0 && col < 2 || row === 3 && col === 4) continue;
    if (row === 0 && col === 2 || row === 3 && col === 1) {
      out += '<path d="M' + (px + 2) + ' ' + (py - 2) + 'v4h-4z" fill="' + (row ? "#d99" : "#99c") + '"/>';
    } else {
      out += '<path d="M' + (px - 2.5) + ' ' + py + 'h5m-2.500-2.500v5" stroke="' + (row === 1 ? "#006" : "#000") + '"/>';
    }
  }
}
document.getElementById("brushgrid").insertAdjacentHTML("beforeend", out);
```
